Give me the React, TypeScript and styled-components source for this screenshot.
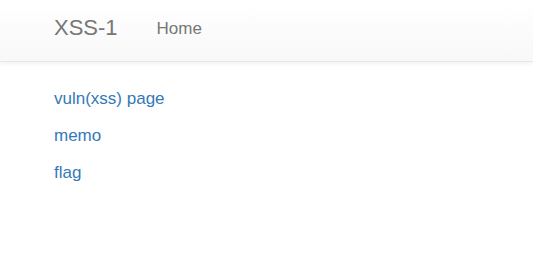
import styled, { createGlobalStyle } from 'styled-components';

const GlobalStyle = createGlobalStyle`
  html, body {
    margin: 0;
    padding: 0;
    background: #fff;
  }
  body {
    font-family: "Liberation Sans", Arial, sans-serif;
    color: #333;
  }
`;

const Navbar = styled.nav`
  display: flex;
  align-items: flex-start;
  height: 61px;
  padding: 0 54px;
  background-image: linear-gradient(to bottom, #fff 0%, #f8f8f8 100%);
  border-bottom: 1px solid #e7e7e7;
  box-shadow: inset 0 1px 0 rgba(255, 255, 255, 0.15),
    0 1px 5px rgba(0, 0, 0, 0.075);
`;

const Brand = styled.a`
  padding-top: 16px;
  font-size: 22px;
  line-height: 24px;
  color: #777;
  text-decoration: none;
`;

const NavList = styled.ul`
  display: flex;
  margin: 0;
  padding: 0 0 0 39px;
  list-style: none;
`;

const NavLink = styled.a`
  display: block;
  padding-top: 17px;
  font-size: 17px;
  line-height: 24px;
  color: #777;
  text-decoration: none;
`;

const Content = styled.main`
  padding: 24px 54px 0;
`;

const Item = styled.p`
  margin: 0 0 12px;
  font-size: 17px;
  line-height: 25px;
`;

const Link = styled.a`
  color: #337ab7;
  text-decoration: none;
`;

const links = ['vuln(xss) page', 'memo', 'flag'];

export default function App() {
  return (
    <>
      <GlobalStyle />
      <Navbar>
        <Brand href="#">XSS-1</Brand>
        <NavList>
          <li>
            <NavLink href="#">Home</NavLink>
          </li>
        </NavList>
      </Navbar>
      <Content>
        {links.map((label) => (
          <Item key={label}>
            <Link href="#">{label}</Link>
          </Item>
        ))}
      </Content>
    </>
  );
}
